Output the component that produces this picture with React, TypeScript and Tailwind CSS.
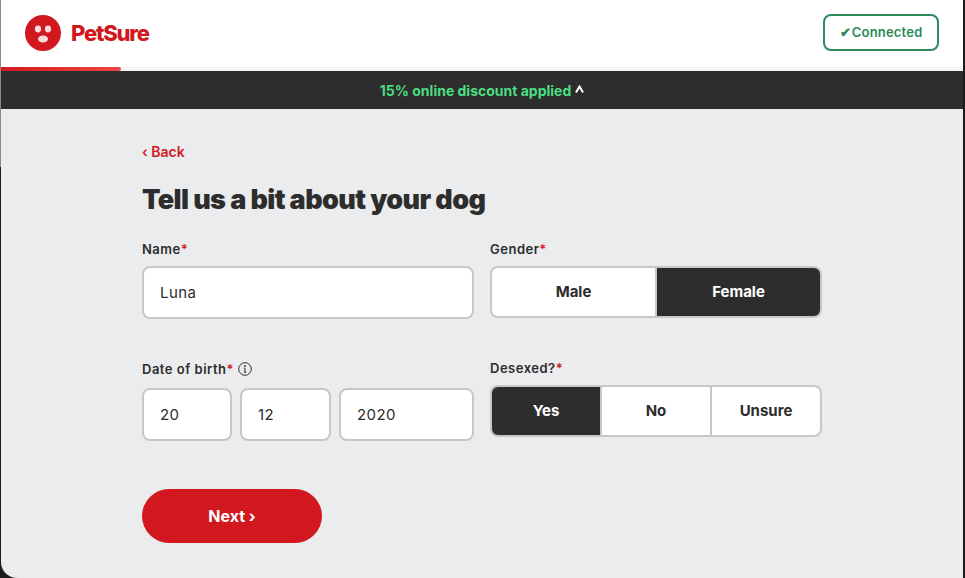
const labelClass = "text-[13px] leading-4 font-semibold text-[#2d2d2d] tracking-[0.5px]";
const fieldClass =
  "h-[53px] rounded-lg border-2 border-[#c6c7cb] bg-white pl-[16px] pt-px flex items-center text-[15px] text-[#2d2d2d] tracking-[0.4px]";

const Label = ({ text }: { text: string }) => (
  <span className={labelClass}>
    {text}
    <span className="text-[#d2181f]">*</span>
  </span>
);

const Segmented = ({
  options,
  active,
}: {
  options: string[];
  active: string;
}) => (
  <div className="flex h-[52px] rounded-lg border-2 border-[#c6c7cb] bg-[#c6c7cb] gap-[2px] overflow-hidden">
    {options.map((option) => (
      <div
        key={option}
        className={
          option === active
            ? "flex-1 flex items-center justify-center bg-[#2d2d2d] text-white text-[15px] font-bold"
            : "flex-1 flex items-center justify-center bg-white text-[#2d2d2d] text-[15px] font-bold"
        }
      >
        {option}
      </div>
    ))}
  </div>
);

export default function App() {
  return (
    <div className="relative h-[578px] w-[965px] overflow-hidden bg-[#1c1c1c] pl-px pr-[2px] font-['Inter',sans-serif]">
      {/* Window edge */}
      <div className="absolute left-0 top-0 h-[167px] w-px bg-[#8a8a8a]" />

      <div className="h-full flex flex-col rounded-bl-[16px] bg-[#ebecee] overflow-hidden">
        {/* Header */}
        <header className="h-[67px] bg-white flex items-start justify-between pl-6 pr-6 pt-[14px]">
          <div className="mt-px flex items-center gap-[10px]">
            <svg width="36" height="36" viewBox="0 0 36 36">
              <circle cx="18" cy="18" r="18" fill="#d2181f" />
              <ellipse cx="13" cy="14" rx="3.1" ry="3.4" fill="#f6dcdc" />
              <ellipse cx="23" cy="14" rx="3.1" ry="3.4" fill="#f6dcdc" />
              <ellipse cx="18" cy="24" rx="5" ry="3.4" fill="#f6dcdc" />
            </svg>
            <span className="text-[22px] leading-none font-extrabold text-[#d2181f] tracking-[-1.2px]">
              PetSure
            </span>
          </div>
          <div className="h-[37px] w-[116px] rounded-lg border-2 border-[#2c8a5b] flex items-center justify-center gap-[1px] text-[13px] font-semibold text-[#2c8a5b] tracking-[0.2px]">
            <span>✔</span>
            <span>Connected</span>
          </div>
        </header>

        {/* Progress */}
        <div className="h-1 bg-[#f5f5f5]">
          <div className="h-full w-[120px] rounded-r-sm bg-gradient-to-r from-[#d2181f] to-[#ef4444]" />
        </div>

        {/* Discount bar */}
        <div className="h-[38px] bg-[#2d2d2d] flex items-center justify-center text-[14px] font-bold">
          <span className="text-[#4ade80]">15% online discount applied</span>
          <svg className="ml-1 -mt-[3px]" width="9" height="8" viewBox="0 0 9 8" fill="none" stroke="#ffffff" strokeWidth="2">
            <path d="M1 7.5 4.5 1.5 8 7.5" />
          </svg>
        </div>

        {/* Form */}
        <main className="pl-[141px] pt-[34px] w-[821px]">
          <div className="text-sm leading-[18px] font-semibold text-[#d2181f]">‹ Back</div>
          <h1 className="mt-[22px] text-[27px] leading-[34px] font-black text-[#2d2d2d] tracking-[-0.6px]">
            Tell us a bit about your dog
          </h1>

          <div className="mt-[24px] grid grid-cols-2 gap-x-4">
            <div className="flex flex-col gap-[9px]">
              <Label text="Name" />
              <div className={fieldClass}>Luna</div>
            </div>
            <div className="flex flex-col gap-[9px]">
              <Label text="Gender" />
              <Segmented options={["Male", "Female"]} active="Female" />
            </div>
          </div>

          <div className="mt-[40px] grid grid-cols-2 gap-x-4">
            <div className="flex flex-col gap-[11px] pt-[2px]">
              <div className="flex items-center gap-1">
                <Label text="Date of birth" />
                <svg width="14" height="14" viewBox="0 0 14 14" fill="none" stroke="#2d2d2d" strokeWidth="1">
                  <circle cx="7" cy="7" r="6.3" />
                  <path d="M7 6.2v4M5.9 10.2h2.2M5.9 6.2H7" />
                  <circle cx="7" cy="4" r="0.5" fill="#2d2d2d" />
                </svg>
              </div>
              <div className="flex gap-2">
                <div className={`${fieldClass} w-[90px]`}>20</div>
                <div className={`${fieldClass} w-[91px]`}>12</div>
                <div className={`${fieldClass} flex-1`}>2020</div>
              </div>
            </div>
            <div className="flex flex-col gap-[9px] pt-px">
              <Label text="Desexed?" />
              <Segmented options={["Yes", "No", "Unsure"]} active="Yes" />
            </div>
          </div>

          <button className="mt-[48px] h-[54px] w-[180px] rounded-full bg-[#d2181f] text-white text-[16px] font-bold">
            Next ›
          </button>
        </main>
      </div>
    </div>
  );
}
